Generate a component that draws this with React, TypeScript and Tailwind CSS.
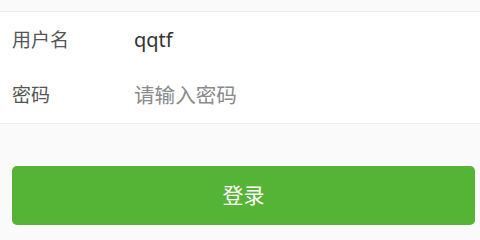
import React, { useState } from 'react';

function App() {
  const [username, setUsername] = useState('qqtf');
  const [password, setPassword] = useState('');

  return (
    <div
      className="min-h-[240px] w-full bg-[#fafafa] pt-[11px]"
      style={{ fontFamily: '"Noto Sans", "Noto Sans CJK SC", sans-serif' }}
    >
      <div className="bg-white border-y border-[#ececec]">
        <div className="flex h-[56px] items-center px-3">
          <label className="w-[122px] text-[19px] text-[#555]">用户名</label>
          <input
            className="flex-1 bg-transparent text-[20px] text-[#333] outline-none"
            value={username}
            onChange={(e) => setUsername(e.target.value)}
          />
        </div>
        <div className="flex h-[55px] items-center px-3">
          <label className="w-[122px] text-[19px] text-[#555]">密码</label>
          <input
            type="password"
            className="flex-1 bg-transparent text-[20.6px] text-[#333] outline-none placeholder:text-[#8a8a8a]"
            placeholder="请输入密码"
            value={password}
            onChange={(e) => setPassword(e.target.value)}
          />
        </div>
      </div>

      <div className="pl-3 pr-[5px] pt-[42px]">
        <button className="h-[59px] w-full rounded-[5px] bg-[#55b335] text-[21px] text-white">
          登录
        </button>
      </div>
    </div>
  );
}

export default App;
